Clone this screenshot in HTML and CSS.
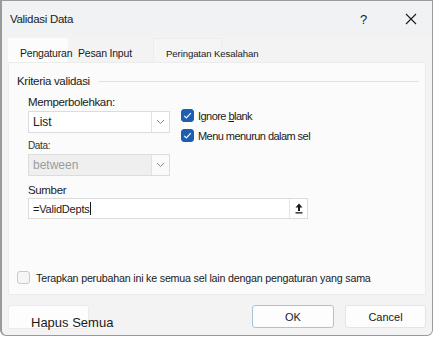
FILE: index.html
```html
<!DOCTYPE html>
<html lang="id">
<head>
<meta charset="utf-8">
<title>Validasi Data</title>
<link rel="stylesheet" href="styles.css">
</head>
<body>
<div class="window">
  <div class="titlebar">
    <span class="title">Validasi Data</span>
    <span class="help">?</span>
    <span class="close">
      <svg width="12" height="12" viewBox="0 0 12 12"><path d="M1 1 L11 11 M11 1 L1 11" stroke="#1a1a1a" stroke-width="1.1" fill="none"/></svg>
    </span>
  </div>
  <div class="tabs">
    <div class="tab tab-active">Pengaturan</div>
    <div class="tab tab-two">Pesan Input</div>
    <div class="tab tab-three">Peringatan Kesalahan</div>
  </div>
  <div class="panel">
    <div class="legend"><span>Kriteria validasi</span><span class="rule"></span></div>
    <div class="criteria">
      <div class="left">
        <div class="label">Memperbolehkan:</div>
        <div class="select">
          <span class="value">List</span>
          <span class="arrow"><svg width="9" height="6" viewBox="0 0 9 6"><path d="M1 1 L4.5 4.5 L8 1" stroke="#8a8a8a" stroke-width="1" fill="none"/></svg></span>
        </div>
        <div class="label small">Data:</div>
        <div class="select disabled">
          <span class="value">between</span>
          <span class="arrow"><svg width="9" height="6" viewBox="0 0 9 6"><path d="M1 1 L4.5 4.5 L8 1" stroke="#8a8a8a" stroke-width="1" fill="none"/></svg></span>
        </div>
      </div>
      <div class="right">
        <div class="check-row">
          <span class="cb checked"><svg width="13" height="13" viewBox="0 0 13 13"><path d="M3.2 6.8 L5.4 9 L9.8 4.2" stroke="#fff" stroke-width="1.2" fill="none"/></svg></span>
          <span>Ignore <u>b</u>lank</span>
        </div>
        <div class="check-row">
          <span class="cb checked"><svg width="13" height="13" viewBox="0 0 13 13"><path d="M3.2 6.8 L5.4 9 L9.8 4.2" stroke="#fff" stroke-width="1.2" fill="none"/></svg></span>
          <span>Menu menurun dalam sel</span>
        </div>
      </div>
    </div>
    <div class="label source-label">Sumber</div>
    <div class="input">
      <span class="value">=ValidDepts<span class="caret"></span></span>
      <span class="pick"><svg width="8" height="11" viewBox="0 0 8 11"><path d="M4 0.5 L7.5 4.5 L5 4.5 L5 8 L3 8 L3 4.5 L0.5 4.5 Z" fill="#1a1a1a"/><rect x="0.5" y="9.2" width="7" height="1.3" fill="#1a1a1a"/></svg></span>
    </div>
    <div class="apply">
      <span class="cb"></span>
      <span>Terapkan perubahan ini ke semua sel lain dengan pengaturan yang sama</span>
    </div>
  </div>
  <div class="footer">
    <div class="btn clear">Hapus Semua</div>
    <div class="spacer"></div>
    <div class="btn ok">OK</div>
    <div class="btn cancel">Cancel</div>
  </div>
</div>
</body>
</html>
```
FILE: styles.css
```css
html, body {
  margin: 0;
  padding: 0;
  background: #ffffff;
}
body {
  font-family: "Liberation Sans", Arial, sans-serif;
  color: #1a1a1a;
}
.window {
  box-sizing: border-box;
  width: 433px;
  height: 336px;
  background: #f3f3f3;
  border: 1px solid #9a9a9a;
  border-left-width: 2px;
  border-radius: 0 0 6px 6px;
  display: flex;
  flex-direction: column;
}
.titlebar {
  height: 36px;
  display: flex;
  align-items: center;
  padding-left: 8px;
  background: #f1f2f4;
}
.title {
  font-size: 11.5px;
  letter-spacing: -0.3px;
  flex: 1;
}
.help {
  font-size: 13px;
  width: 12px;
  margin-right: 33px;
}
.close {
  width: 12px;
  height: 12px;
  margin-right: 15px;
  display: flex;
}
.tabs {
  display: flex;
  height: 24px;
  margin-top: 1px;
  margin-left: 6px;
  font-size: 10.5px;
  letter-spacing: -0.2px;
}
.tab {
  box-sizing: border-box;
  white-space: nowrap;
  display: flex;
  align-items: center;
  padding-top: 5px;
}
.tab-active {
  width: 60px;
  background: #fcfcfc;
  padding-left: 12px;
}
.tab-two {
  width: 85px;
  padding-left: 10px;
}
.tab-three {
  width: 69px;
  padding-left: 12px;
  font-size: 9.6px;
  letter-spacing: -0.1px;
  background: #f5f5f5;
  border: 1px solid #ececec;
  border-bottom: none;
}
.panel {
  box-sizing: border-box;
  margin: 0 6px 0 6px;
  height: 233px;
  background: #fbfbfb;
  border: 1px solid #ececec;
  display: flex;
  flex-direction: column;
  padding: 10px 0 10px 0;
  font-size: 11.5px;
}
.legend {
  display: flex;
  align-items: center;
  height: 16px;
  padding-left: 8px;
  padding-right: 6px;
  letter-spacing: -0.3px;
}
.legend .rule {
  flex: 1;
  height: 1px;
  background: #e3e3e3;
  margin-left: 8px;
}
.criteria {
  display: flex;
  padding-left: 19px;
}
.left {
  width: 142px;
  display: flex;
  flex-direction: column;
}
.label {
  height: 18px;
  display: flex;
  align-items: center;
  font-size: 11.5px;
  letter-spacing: -0.35px;
  margin-top: 4px;
}
.label.small {
  font-size: 10px;
  margin-top: 4px;
  height: 17px;
  color: #333;
}
.select {
  box-sizing: border-box;
  height: 22px;
  background: #ffffff;
  border: 1px solid #dcdcdc;
  display: flex;
  align-items: center;
  font-size: 12px;
}
.select .value {
  flex: 1;
  padding-left: 4px;
}
.select .arrow {
  width: 17px;
  height: 100%;
  border-left: 1px solid #e2e2e2;
  display: flex;
  align-items: center;
  justify-content: center;
}
.select.disabled {
  background: #efefef;
  color: #9c9c9c;
}
.select.disabled .arrow {
  background: #fafafa;
}
.right {
  margin-left: 11px;
  padding-top: 20px;
  display: flex;
  flex-direction: column;
  gap: 7px;
  font-size: 11px;
  letter-spacing: -0.55px;
}
.check-row {
  display: flex;
  align-items: center;
  gap: 4px;
  height: 13px;
}
.cb {
  box-sizing: border-box;
  width: 13px;
  height: 13px;
  border-radius: 3px;
  border: 1px solid #c9c9c9;
  background: #f6f6f6;
  display: inline-flex;
  flex: none;
}
.cb.checked {
  background: #1c5fb0;
  border-color: #1c5fb0;
}
.cb.checked svg {
  margin: -1px;
}
.source-label {
  padding-left: 19px;
  margin-top: 5px;
  height: 17px;
}
.input {
  box-sizing: border-box;
  margin-left: 19px;
  width: 280px;
  height: 21px;
  background: #ffffff;
  border: 1px solid #dcdcdc;
  display: flex;
  align-items: center;
  font-size: 11px;
}
.input .value {
  flex: 1;
  padding-left: 4px;
  display: flex;
  align-items: center;
  letter-spacing: -0.2px;
}
.caret {
  display: inline-block;
  width: 1px;
  height: 13px;
  background: #1a1a1a;
}
.pick {
  width: 17px;
  height: 100%;
  border-left: 1px solid #e6e6e6;
  display: flex;
  align-items: center;
  justify-content: center;
}
.apply {
  margin-top: auto;
  display: flex;
  align-items: center;
  padding-left: 8px;
  gap: 6px;
  font-size: 10.7px;
  letter-spacing: -0.2px;
}
.footer {
  display: flex;
  align-items: flex-start;
  padding: 10px 6px 0 6px;
}
.btn {
  box-sizing: border-box;
  height: 23px;
  background: #fdfdfd;
  border: 1px solid #e4e4e4;
  border-radius: 3px;
  display: flex;
  align-items: center;
  justify-content: center;
  font-size: 11px;
}
.btn.clear {
  width: 81px;
  border-color: #ececec;
  justify-content: flex-start;
  padding-left: 22px;
  padding-top: 10px;
  height: 24px;
  font-size: 13px;
  white-space: nowrap;
  overflow: visible;
}
.spacer {
  flex: 1;
}
.btn.ok {
  width: 82px;
  border-color: #a9c3db;
  margin-right: 11px;
}
.btn.cancel {
  width: 81px;
}
```
